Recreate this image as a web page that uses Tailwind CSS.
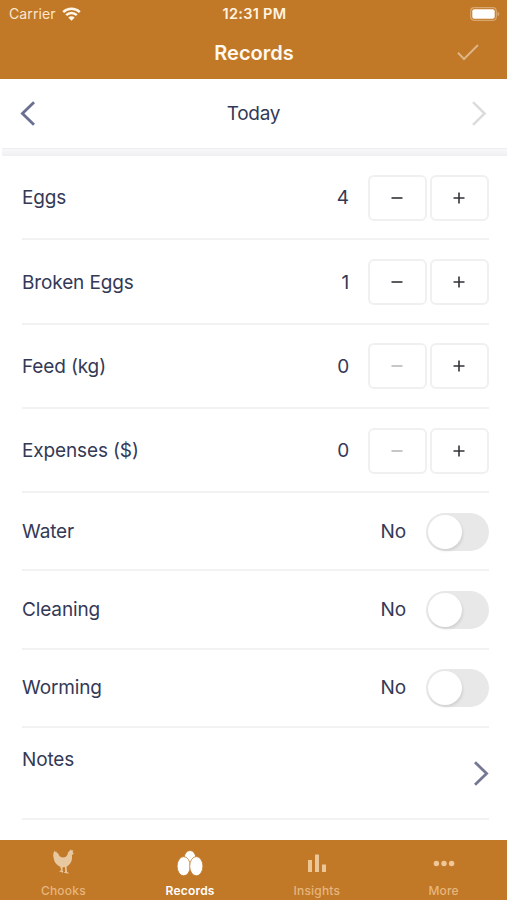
<!DOCTYPE html>
<html lang="en">
<head>
<meta charset="utf-8">
<title>Records</title>
<script src="https://cdn.jsdelivr.net/npm/@tailwindcss/browser@4"></script>
</head>
<body class="w-[507px] h-[900px] overflow-hidden bg-white font-['Inter','Liberation_Sans',sans-serif] text-[#343956]">
<div class="flex flex-col h-[900px]">
  <header class="h-[79px] shrink-0 bg-[#c17827] text-white">
    <div class="grid grid-cols-3 items-center h-[27px] pl-[9px] pr-[7px] text-[14.5px]">
      <div class="flex items-center gap-[6px] text-[#fbe7cd]"><span class="text-[14px] tracking-[0.1px]">Carrier</span>
        <svg class="w-[19px] h-[14px]" viewBox="0 0 19 14" fill="none" stroke="#fff6e8" stroke-width="2.5"><path d="M1.2 5.1A11.8 11.8 0 0 1 17.8 5.1M4.2 8.2A7.5 7.5 0 0 1 14.8 8.2"/><path d="M6.3 10.5A4.6 4.6 0 0 1 12.7 10.5L9.5 13.7Z" fill="#fff6e8" stroke="none"/></svg>
      </div>
      <div class="text-center font-semibold text-[#fff4e2] whitespace-nowrap tracking-[0.3px] pt-px">12:31 PM</div>
      <svg class="justify-self-end w-[30px] h-[14px]" viewBox="0 0 30 14"><rect x=".7" y=".7" width="25.6" height="12.6" rx="3.5" fill="none" stroke="#d9a870" stroke-width="1.2"/><rect x="2.3" y="2.2" width="22.4" height="9.6" rx="2" fill="#fff"/><path d="M27.5 4.8Q29.4 5.5 29.4 7Q29.4 8.5 27.5 9.2Z" fill="#d9a870"/></svg>
    </div>
    <div class="grid grid-cols-3 items-center h-[51px] pr-[28px] pl-[29px]">
      <h1 class="col-start-2 text-center text-[20px] font-semibold text-[#fff8ee]">Records</h1>
      <svg class="justify-self-end w-[22px] h-[17px]" viewBox="0 0 22 17" fill="none" stroke="#dfb485" stroke-width="2"><path d="M1 8.8L7 15L21 1"/></svg>
    </div>
  </header>
  <div class="h-[69px] shrink-0 flex items-center justify-between px-[20px]">
    <svg class="w-[15px] h-[25px]" viewBox="0 0 15 25" fill="none" stroke="#6a7092" stroke-width="2.8"><path d="M14 1.2L2.4 12.5L14 23.8"/></svg>
    <span class="text-[19px] tracking-[-0.3px] pt-px">Today</span>
    <svg class="w-[15px] h-[25px]" viewBox="0 0 15 25" fill="none" stroke="#dcdcdf" stroke-width="2.5"><path d="M1 1.2L12.6 12.5L1 23.8"/></svg>
  </div>
  <div class="h-[8px] shrink-0 ml-[2px] bg-linear-to-b from-[#f8f8fa] to-[#f0f0f4] border-t border-[#eeeef2]"></div>
  <main id="rows" class="flex-1 pl-[22px] pr-[18px] text-[19px] tracking-[-0.13px]"></main>
  <nav class="h-[60px] shrink-0 grid grid-cols-4 bg-[#c17827] text-[#e6b67e] text-[12px] font-medium tracking-[0.2px]">
    <div class="flex flex-col items-center"><svg class="w-[24px] h-[28px] mt-[8px] relative left-px" viewBox="0 0 24 28" fill="#e8c8a0"><path d="M2.9 2.500C1.300 4.500 .8 6.500 1.500 9.500C2 14 4.500 17.300 8.200 18.800L9.300 22.300L7 23.600L9.600 23.900L10.500 25L11.300 23.500L10.500 22.300L10.600 19.300L13 19.300L13.200 23.700L11.700 24.700L14.500 25.300L17.300 25.600L15 23.800L14.500 18.800C18.300 16.500 20.300 13 20 8.500L19.900 6.800L22 6L20.700 4.500L21.300 2.300L19.500 2.500L19 1.300L17.400 3L16 4.500C15.800 6.800 14.500 8.800 12.500 9.300C9.500 9.800 6.800 8.500 6.300 5.500L4.700 4.800L4.600 3.500L3.300 4Z"/></svg><span class="mt-[6px]">Chooks</span></div>
    <div class="flex flex-col items-center text-white font-semibold"><svg class="w-[26px] h-[28px] mt-[8px]" viewBox="0 0 26 28" fill="#fff" stroke="#c17827" stroke-width=".8"><ellipse cx="13" cy="10" rx="5.8" ry="7.5"/><ellipse cx="6.7" cy="18.2" rx="6.600" ry="9.6"/><ellipse cx="19.3" cy="18.2" rx="6.600" ry="9.6"/></svg><span class="mt-[6px]">Records</span></div>
    <div class="flex flex-col items-center"><svg class="w-[20px] h-[28px] mt-[8px]" viewBox="0 0 20 28" fill="#edc697"><path d="M1 12h4v12H1zM8 6.500h4V24H8zM15 16.500h4V24h-4z"/></svg><span class="mt-[6px]">Insights</span></div>
    <div class="flex flex-col items-center"><svg class="w-[22px] h-[28px] mt-[8px]" viewBox="0 0 22 28" fill="#f0c898"><circle cx="3.4" cy="15.500" r="2.7"/><circle cx="11" cy="15.500" r="2.7"/><circle cx="18.600" cy="15.500" r="2.7"/></svg><span class="mt-[6px]">More</span></div>
  </nav>
</div>
<script>
const line = 'border-b-2 border-[#f2f2f3]';
const button = (sign, off) => `<button class="w-[59px] h-[46px] rounded-[6px] border-2 border-[#f0f0f1] flex items-center justify-center"><svg class="w-[12px] h-[12px] mr-px" viewBox="0 0 12 12" stroke="${off ? '#b9b9bc' : '#333338'}" stroke-width="1.6"><path d="M.5 6H11.500${sign === '+' ? 'M6 .5V11.500' : ''}"/></svg></button>`;
const counter = ([name, value]) => `<div class="h-[84.3px] flex items-center pt-px ${line}"><span class="flex-1 pt-[2px]">${name}</span><span class="mr-[19px] pt-[2px]">${value}</span><div class="flex gap-[3px]">${button('-', value === 0)}${button('+')}</div></div>`;
const toggle = name => `<div class="h-[78.2px] flex items-center pt-px ${line}"><span class="flex-1">${name}</span><span class="mr-[20px]">No</span><div class="w-[63px] h-[38px] rounded-full bg-[#e8e8e9] p-[2px]"><div class="w-[34px] h-[34px] rounded-full bg-white shadow-[1px_2px_3px_rgba(0,0,0,0.1)]"></div></div></div>`;
document.getElementById('rows').innerHTML =
  [['Eggs', 4], ['Broken Eggs', 1], ['Feed (kg)', 0], ['Expenses ($)', 0]].map(counter).join('') +
  ['Water', 'Cleaning', 'Worming'].map(toggle).join('') +
  `<div class="h-[92px] flex justify-between ${line}"><span class="mt-[18px]">Notes</span><svg class="w-[15px] h-[25px] mt-[33px]" viewBox="0 0 15 25" fill="none" stroke="#747894" stroke-width="2.8"><path d="M1 1.2L12.600 12.500L1 23.800"/></svg></div>`;
</script>
</body>
</html>
